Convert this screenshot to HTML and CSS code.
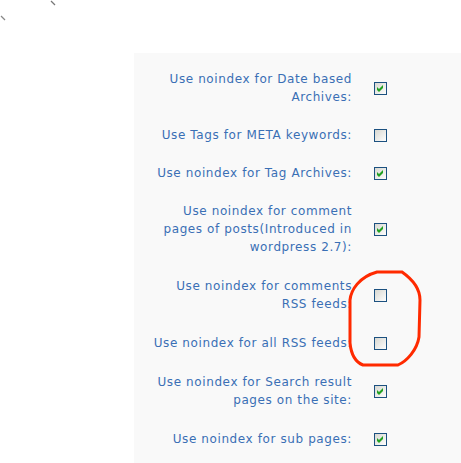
FILE: index.html
```html
<!DOCTYPE html>
<html>
<head>
<meta charset="utf-8">
<link rel="stylesheet" href="styles.css">
</head>
<body>
<svg class="marks" width="60" height="24" viewBox="0 0 60 24">
  <line x1="51" y1="1" x2="55" y2="5" stroke="#777" stroke-width="1.3"/>
  <line x1="1" y1="16" x2="5" y2="20" stroke="#888" stroke-width="1.3"/>
</svg>
<div class="panel">
  <table class="form-table">
    <tr><th>Use noindex for Date based<br>Archives:</th><td><svg class="cb" width="13" height="13" viewBox="0 0 13 13"><use href="#box"/><use href="#tick"/></svg></td></tr>
    <tr><th>Use Tags for META keywords:</th><td><svg class="cb" width="13" height="13" viewBox="0 0 13 13"><use href="#box"/></svg></td></tr>
    <tr><th>Use noindex for Tag Archives:</th><td><svg class="cb" width="13" height="13" viewBox="0 0 13 13"><use href="#box"/><use href="#tick"/></svg></td></tr>
    <tr><th>Use noindex for comment<br>pages of posts(Introduced in<br>wordpress 2.7):</th><td><svg class="cb" width="13" height="13" viewBox="0 0 13 13"><use href="#box"/><use href="#tick"/></svg></td></tr>
    <tr class="r-tall"><th>Use noindex for comments<br>RSS feeds:</th><td><svg class="cb" width="13" height="13" viewBox="0 0 13 13"><use href="#box"/></svg></td></tr>
    <tr class="r-tall"><th>Use noindex for all RSS feeds:</th><td><svg class="cb" width="13" height="13" viewBox="0 0 13 13"><use href="#box"/></svg></td></tr>
    <tr class="r-tall"><th>Use noindex for Search result<br>pages on the site:</th><td><svg class="cb" width="13" height="13" viewBox="0 0 13 13"><use href="#box"/><use href="#tick"/></svg></td></tr>
    <tr class="r-tall"><th>Use noindex for sub pages:</th><td><svg class="cb" width="13" height="13" viewBox="0 0 13 13"><use href="#box"/><use href="#tick"/></svg></td></tr>
  </table>
</div>
<svg class="circle" width="461" height="463" viewBox="0 0 461 463">
  <path d="M377 272 L402 272 C412 279 420 288 420 300 L419 337 C417 350 407 361 398 365 L363 365 C355 362 351 353 350 343 L350 300 C351 290 359 277 377 272 Z" fill="none" stroke="#ff2a00" stroke-width="3"/>
</svg>
<svg width="0" height="0" class="defs">
  <defs>
    <linearGradient id="g" x1="0" y1="0" x2="1" y2="1">
      <stop offset="0" stop-color="#d6d6cf"/>
      <stop offset="1" stop-color="#ffffff"/>
    </linearGradient>
    <g id="box">
      <rect x="0.5" y="0.5" width="12" height="12" fill="url(#g)" stroke="#1c5180"/>
    </g>
    <g id="tick">
      <polygon points="3,5 5,7 9,3 9,6 5,10 3,8" fill="#21a121"/>
    </g>
  </defs>
</svg>
</body>
</html>
```

FILE: styles.css
```css
html, body {
  margin: 0;
  padding: 0;
  background: #ffffff;
}
body {
  font-family: "DejaVu Sans", Verdana, sans-serif;
  font-size: 12px;
  position: relative;
  width: 461px;
  height: 463px;
  overflow: hidden;
}
.marks {
  position: absolute;
  left: 0;
  top: 0;
}
.defs {
  position: absolute;
}
.panel {
  margin: 53px 0 0 134px;
  padding: 7px 0 20px 0;
  background: #f9f9f9;
}
.form-table {
  border-collapse: collapse;
  border-spacing: 0;
}
.form-table th {
  width: 218px;
  padding: 10px 10px 10px 0;
  text-align: right;
  font-weight: normal;
  color: #3a6fb5;
  line-height: 18px;
  letter-spacing: 0.6px;
  vertical-align: middle;
}
.form-table td {
  padding: 10px 0 10px 12px;
  vertical-align: middle;
  line-height: 0;
}
.form-table .r-tall th,
.form-table .r-tall td {
  padding-top: 11px;
}
.cb {
  display: block;
}
.circle {
  position: absolute;
  left: 0;
  top: 0;
  pointer-events: none;
}
```
